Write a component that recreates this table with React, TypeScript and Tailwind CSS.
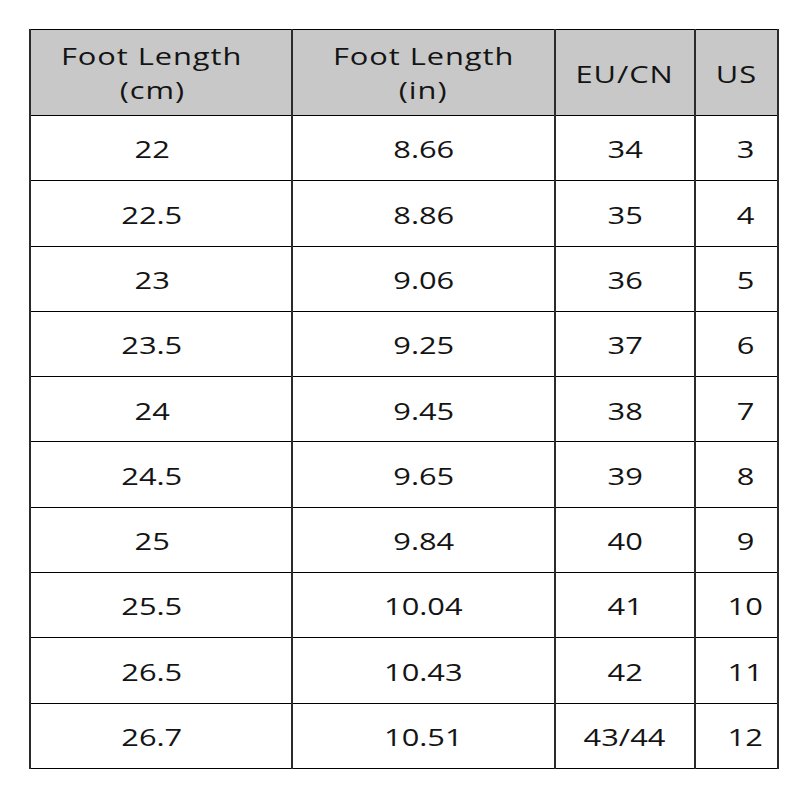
const rows = [
  ['22', '8.66', '34', '3'],
  ['22.5', '8.86', '35', '4'],
  ['23', '9.06', '36', '5'],
  ['23.5', '9.25', '37', '6'],
  ['24', '9.45', '38', '7'],
  ['24.5', '9.65', '39', '8'],
  ['25', '9.84', '40', '9'],
  ['25.5', '10.04', '41', '10'],
  ['26.5', '10.43', '42', '11'],
  ['26.7', '10.51', '43/44', '12'],
];

const T = ({ children }: { children: React.ReactNode }) => (
  <span className="inline-block scale-x-[1.34]">{children}</span>
);

const cell = 'border-x-2 border-x-[#2b2b2b] border-y border-y-black p-0 text-center align-middle';

export default function App() {
  return (
    <div className="w-[800px] h-[800px] bg-white pt-[29px] pl-[29px] font-['Open_Sans',sans-serif] text-[23px] text-[#141414]">
      <table className="border-collapse table-fixed w-[748px]">
        <colgroup>
          <col className="w-[262px]" />
          <col className="w-[263px]" />
          <col className="w-[140px]" />
          <col className="w-[83px]" />
        </colgroup>
        <thead>
          <tr className="h-[86px] bg-[#c8c8c8] leading-[34px] tracking-[0.7px]">
            <th className={`${cell} font-normal pr-[18px]`}>
              <T>Foot Length</T>
              <br />
              <T>(cm)</T>
            </th>
            <th className={`${cell} font-normal`}>
              <T>Foot Length</T>
              <br />
              <T>(in)</T>
            </th>
            <th className={`${cell} font-normal pt-[2px]`}>
              <T>EU/CN</T>
            </th>
            <th className={`${cell} font-normal pt-[2px]`}>
              <T>US</T>
            </th>
          </tr>
        </thead>
        <tbody>
          {rows.map((r, i) => (
            <tr key={i} className="h-[65.3px]">
              <td className={`${cell} pr-[18px] pt-[3px]`}>
                <T>{r[0]}</T>
              </td>
              <td className={`${cell} pt-[3px]`}>
                <T>{r[1]}</T>
              </td>
              <td className={`${cell} pt-[3px]`}>
                <T>{r[2]}</T>
              </td>
              <td className={`${cell} pl-[18px] pt-[3px]`}>
                <T>{r[3]}</T>
              </td>
            </tr>
          ))}
        </tbody>
      </table>
    </div>
  );
}
